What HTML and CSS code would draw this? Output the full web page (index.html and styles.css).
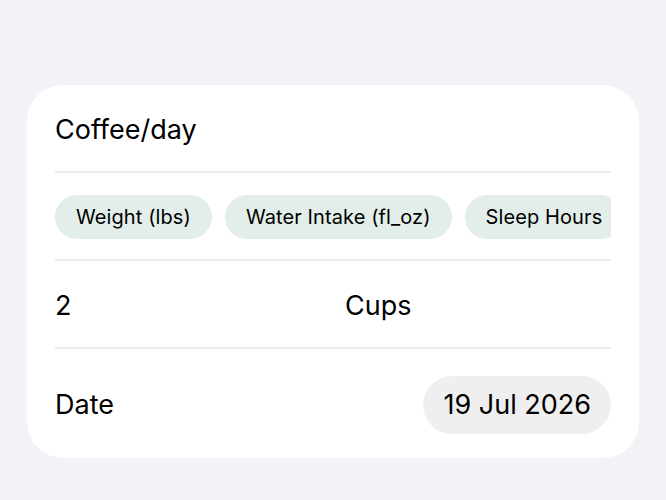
FILE: index.html
```html
<!doctype html>
<html>
<head>
    <title>Log entry</title>
    <meta charset="utf-8">
    <link rel="stylesheet" href="styles.css">
</head>
<body>
    <div class="card">
        <div class="row">
            <span class="label">Coffee/day</span>
        </div>
        <div class="row chips">
            <span class="chip">Weight (lbs)</span>
            <span class="chip">Water Intake (fl_oz)</span>
            <span class="chip">Sleep Hours</span>
        </div>
        <div class="row amount">
            <span class="label">2</span>
            <span class="label">Cups</span>
        </div>
        <div class="row last">
            <span class="label">Date</span>
            <span class="date-pill">19 Jul 2026</span>
        </div>
    </div>
</body>
</html>
```

FILE: styles.css
```css
body {
    margin: 0;
    padding: 85px 27px 0;
    background-color: #f2f2f7;
    font-family: Inter, "Liberation Sans", sans-serif;
    color: #000;
}

.card {
    background-color: #fff;
    border-radius: 36px;
    padding: 0 28px;
}

.row {
    display: flex;
    align-items: center;
    height: 88px;
    box-sizing: border-box;
    border-bottom: 2px solid #ebebed;
}

.row:first-child {
    padding-top: 3px;
}

.row.last {
    height: 109px;
    padding-top: 2px;
    border-bottom: none;
    justify-content: space-between;
}

.label {
    font-size: 27px;
}

.chips {
    gap: 13px;
    overflow: hidden;
    padding-top: 2px;
}

.chip {
    flex: none;
    height: 44px;
    line-height: 44px;
    padding: 0 21px;
    border-radius: 22px;
    background-color: #e3ede9;
    font-size: 20px;
    letter-spacing: 0.1px;
    white-space: nowrap;
}

.amount {
    display: grid;
    grid-template-columns: 1fr 1fr;
    column-gap: 24px;
    padding-top: 3px;
}

.date-pill {
    height: 58px;
    line-height: 58px;
    padding: 0 20px;
    border-radius: 29px;
    background-color: #efefef;
    font-size: 27px;
}
```
